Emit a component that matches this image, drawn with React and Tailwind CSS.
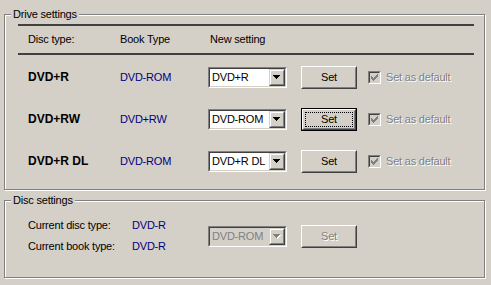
import React from 'react';

// Win2000-style property page: drive + disc settings

const rows = [
  { disc: 'DVD+R', book: 'DVD-ROM', setting: 'DVD+R' },
  { disc: 'DVD+RW', book: 'DVD+RW', setting: 'DVD-ROM', focused: true },
  { disc: 'DVD+R DL', book: 'DVD-ROM', setting: 'DVD+R DL' },
];

const Arrow = ({ disabled }) => (
  <svg width="8" height="5" viewBox="0 0 8 5" shapeRendering="crispEdges" className="overflow-visible">
    {disabled && <path d="M1 1h7v1h-1v1h-1v1h-1v1h-1v-1h-1v-1h-1v-1h-1z" fill="#fff" />}
    <path d="M0 0h7v1h-1v1h-1v1h-1v1h-1v-1h-1v-1h-1v-1h-1z" fill={disabled ? '#808080' : '#000'} />
  </svg>
);

const DropButton = ({ disabled }) => (
  <div className="w-[16px] h-full border border-t-[#d4d0c8] border-l-[#d4d0c8] border-b-[#404040] border-r-[#404040]">
    <div className="h-full bg-[#d4d0c8] flex items-center justify-center border border-t-white border-l-white border-b-[#808080] border-r-[#808080]">
      <Arrow disabled={disabled} />
    </div>
  </div>
);

const Combo = ({ value, disabled }) => (
  <div className="w-[79px] h-[21px] border border-t-[#808080] border-l-[#808080] border-b-white border-r-white">
    <div
      className={`h-full flex border border-t-[#404040] border-l-[#404040] border-b-[#d4d0c8] border-r-[#d4d0c8] ${
        disabled ? 'bg-[#d4d0c8] text-[#808080]' : 'bg-white text-black'
      }`}
    >
      <div className="flex-1 pl-[2px] flex items-center whitespace-nowrap overflow-hidden">{value}</div>
      <DropButton disabled={disabled} />
    </div>
  </div>
);

const SetButton = ({ focused, disabled }) => {
  const label = (
    <span className={disabled ? 'text-[#808080] [text-shadow:1px_1px_0_#fff]' : 'text-black'}>Set</span>
  );
  if (focused) {
    return (
      <div className="w-[56px] h-[23px] border border-black">
        <div className="h-full border border-t-white border-l-white border-b-[#404040] border-r-[#404040]">
          <div className="h-full border border-t-[#d4d0c8] border-l-[#d4d0c8] border-b-[#808080] border-r-[#808080] p-[1px]">
            <div className="h-full border border-dotted border-black flex items-center justify-center">{label}</div>
          </div>
        </div>
      </div>
    );
  }
  return (
    <div className="w-[56px] h-[23px] border border-t-white border-l-white border-b-[#404040] border-r-[#404040]">
      <div className="h-full flex items-center justify-center border border-t-[#d4d0c8] border-l-[#d4d0c8] border-b-[#808080] border-r-[#808080]">
        {label}
      </div>
    </div>
  );
};

const CheckMark = () => (
  <svg width="7" height="7" viewBox="0 0 7 7" shapeRendering="crispEdges">
    <path
      d="M6 0h1v3h-1zM5 1h1v3h-1zM4 2h1v3h-1zM0 2h1v3h-1zM1 3h1v3h-1zM2 4h1v3h-1zM3 3h1v3h-1z"
      fill="#808080"
    />
  </svg>
);

const DisabledCheck = ({ label }) => (
  <div className="flex items-center gap-[5px]">
    <div className="w-[13px] h-[13px] border border-t-[#808080] border-l-[#808080] border-b-white border-r-white">
      <div className="h-full bg-[#d4d0c8] flex items-center justify-center border border-t-[#404040] border-l-[#404040] border-b-[#d4d0c8] border-r-[#d4d0c8]">
        <CheckMark />
      </div>
    </div>
    <span className="text-[#808080] [text-shadow:1px_1px_0_#fff] whitespace-nowrap">{label}</span>
  </div>
);

const GroupBox = ({ title, className, children }) => (
  <div
    className={`relative w-[481px] border border-[#808080] shadow-[1px_1px_0_#fff,inset_1px_1px_0_#fff] ${className}`}
  >
    <div className="absolute left-[6px] top-[-8px] px-[2px] bg-[#d4d0c8] leading-[14px] text-black">{title}</div>
    {children}
  </div>
);

export default function App() {
  return (
    <div
      className="w-[491px] h-[285px] bg-[#d4d0c8] pt-[14px] pl-[4px] text-[11px] tracking-[-0.2px] leading-none text-black overflow-hidden"
      style={{ fontFamily: '"Liberation Sans", Arial, sans-serif' }}
    >
      {/* Drive settings */}
      <GroupBox title="Drive settings" className="h-[176px] pl-[13px] pt-[9px]">
        <div className="w-[456px] h-[2px] bg-[#404040]" />
        <div className="h-[27px] flex items-center pl-[10px]">
          <div className="w-[92px]">Disc type:</div>
          <div className="w-[90px]">Book Type</div>
          <div>New setting</div>
        </div>
        <div className="w-[456px] h-[2px] bg-[#404040]" />

        <div className="pt-[1px]">
          {rows.map((r) => (
            <div key={r.disc} className="h-[42px] flex items-center pl-[10px]">
              <div className="w-[92px] font-bold text-[12px] tracking-normal">{r.disc}</div>
              <div className="w-[88px] text-[#000080]">{r.book}</div>
              <Combo value={r.setting} />
              <div className="ml-[14px]">
                <SetButton focused={r.focused} />
              </div>
              <div className="ml-[11px]">
                <DisabledCheck label="Set as default" />
              </div>
            </div>
          ))}
        </div>
      </GroupBox>

      {/* Disc settings */}
      <GroupBox title="Disc settings" className="h-[78px] mt-[10px] pl-[23px] pt-[14px]">
        <div className="flex items-center">
          <div className="w-[104px]">
            <div className="h-[21px] flex items-center">Current disc type:</div>
            <div className="h-[21px] flex items-center">Current book type:</div>
          </div>
          <div className="w-[76px] text-[#000080]">
            <div className="h-[21px] flex items-center">DVD-R</div>
            <div className="h-[21px] flex items-center">DVD-R</div>
          </div>
          <Combo value="DVD-ROM" disabled />
          <div className="ml-[14px]">
            <SetButton disabled />
          </div>
        </div>
      </GroupBox>
    </div>
  );
}
